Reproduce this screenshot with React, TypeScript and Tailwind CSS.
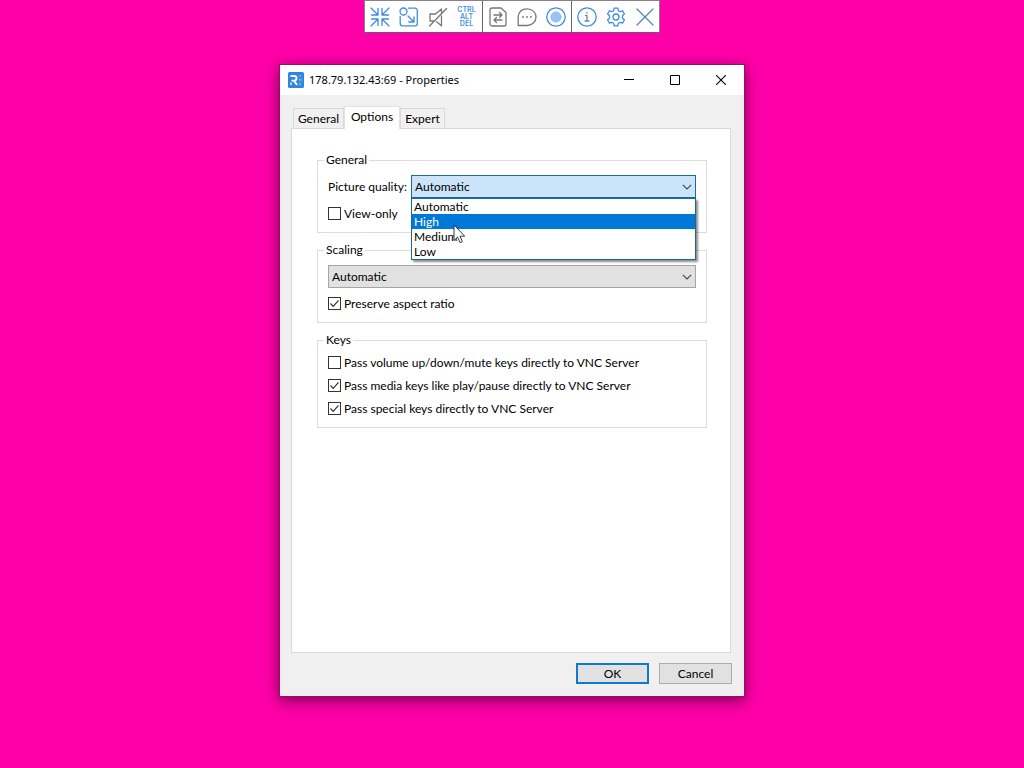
import { useState } from "react";
import type { ReactNode } from "react";

const BLUE = "#3d8ce4";
const GREY = "#777777";

function ToolButton({ label, children }: { label: string; children: ReactNode }) {
  return (
    <button type="button" aria-label={label} className="flex w-[29px] items-center justify-center">
      {children}
    </button>
  );
}

function ToolIcon({ color, children }: { color: string; children: ReactNode }) {
  return (
    <svg
      width="20"
      height="20"
      viewBox="0 0 20 20"
      fill="none"
      stroke={color}
      strokeWidth="1.3"
      strokeLinecap="round"
      strokeLinejoin="round"
    >
      {children}
    </svg>
  );
}

function Separator() {
  return <span className="ml-px w-px bg-[#666666]" />;
}

function Toolbar() {
  return (
    <div role="toolbar" className="flex h-[33px] border border-[#8c8088] border-b-[#77556c] bg-white">
      <ToolButton label="Exit full screen">
        <ToolIcon color={BLUE}>
          <path d="M1 1l7 7M8 1.500V8H1.500M19 1l-7 7M12 1.500V8h6.500M1 19l7-7M8 18.500V12H1.500M19 19l-7-7M12 18.500V12h6.500" />
        </ToolIcon>
      </ToolButton>
      <ToolButton label="Scale to window">
        <ToolIcon color={BLUE}>
          <circle cx="4.500" cy="4.500" r="3.500" />
          <path d="M9.500 1.200h6.500a2.300 2.300 0 0 1 2.300 2.300v13a2.300 2.300 0 0 1-2.300 2.300H3.500a2.300 2.300 0 0 1-2.300-2.300V9.500M9 9l6 6M15 9.800V15H9.800" />
        </ToolIcon>
      </ToolButton>
      <ToolButton label="Mute audio">
        <ToolIcon color={GREY}>
          <path d="M13.500 5V2L7.500 7H2v7h4M8.500 14.800l5 4V9M1.500 19L18.500 1.500" />
        </ToolIcon>
      </ToolButton>
      <button
        type="button"
        className="flex w-[29px] flex-col items-center justify-center font-['Inter',sans-serif] text-[7px] leading-[7px] font-semibold text-[#4a90dc]"
      >
        <span>CTRL</span>
        <span>ALT</span>
        <span>DEL</span>
      </button>
      <Separator />
      <ToolButton label="Transfer files">
        <ToolIcon color={GREY}>
          <path d="M4 1h9l5 4.500V17a2 2 0 0 1-2 2H4a2 2 0 0 1-2-2V3a2 2 0 0 1 2-2zM6 8h8M11.500 5.500L14 8l-2.500 2.500M14 13H6M8.500 10.500L6 13l2.500 2.500" />
        </ToolIcon>
      </ToolButton>
      <ToolButton label="Chat">
        <ToolIcon color={GREY}>
          <path d="M1.200 18.500V10C1.200 5.200 5 1.800 10 1.800s9 3.500 9 8.200-4 8.500-9 8.500z" />
          <path d="M6 10h.01M10 10h.01M14 10h.01" strokeWidth="1.800" />
        </ToolIcon>
      </ToolButton>
      <ToolButton label="Record session">
        <ToolIcon color={BLUE}>
          <circle cx="10" cy="10" r="9.200" />
          <circle cx="10" cy="10" r="5" fill="#9cc1f5" stroke="#8ab6f2" strokeWidth="1" />
        </ToolIcon>
      </ToolButton>
      <Separator />
      <ToolButton label="Session information">
        <ToolIcon color={BLUE}>
          <circle cx="10" cy="10" r="9.200" />
          <path d="M8.500 8.500H10V14M8 14h4M10 5.500v.4" stroke="#6b86b0" />
        </ToolIcon>
      </ToolButton>
      <ToolButton label="Properties">
        <ToolIcon color={BLUE}>
          <circle cx="10" cy="10" r="3" />
          <path d="M8.200 1.200h3.600l.6 2.500 1.700 1 2.500-.8 1.800 3.100-1.900 1.800v2.300l1.900 1.900-1.800 3.100-2.500-.8-1.700 1-.6 2.500H8.200l-.6-2.500-1.700-1-2.500.8L1.600 13l1.900-1.900V8.800L1.600 7l1.800-3.100 2.500.8 1.700-1z" />
        </ToolIcon>
      </ToolButton>
      <ToolButton label="End session">
        <ToolIcon color="#5686bb">
          <path d="M2 2l16 16M18 2L2 18" />
        </ToolIcon>
      </ToolButton>
    </div>
  );
}

function AppLogo() {
  return (
    <svg width="16" height="16" viewBox="0 0 16 16" fill="none">
      <rect width="16" height="16" rx="1.500" fill="#2f86dc" />
      <path d="M2.500 4H6.200a2.300 2.300 0 0 1 0 4.600H3.500M6 8.600L9 13" stroke="#ffffff" strokeWidth="1.900" />
      <path d="M3 10.500V13" stroke="#ffffff" strokeWidth="1.300" />
      <path d="M11 3l1 2 1-2M11.500 9V6.500L13.500 9V6.500M13.500 11h-2v2h2" stroke="#8fc2f4" strokeWidth="0.700" />
    </svg>
  );
}

function TitleBar() {
  return (
    <header className="flex h-[30px] items-stretch bg-white pl-2">
      <div className="flex flex-1 items-center gap-[5px]">
        <AppLogo />
        <h1 className="font-['Noto_Sans',sans-serif] text-[11px] leading-4">178.79.132.43:69 - Properties</h1>
      </div>
      <button type="button" aria-label="Minimize" className="flex w-[46px] items-center justify-center">
        <svg width="10" height="11" viewBox="0 0 10 11" stroke="#000000">
          <path d="M0 4.500h10" />
        </svg>
      </button>
      <button type="button" aria-label="Maximize" className="flex w-[46px] items-center justify-center">
        <svg width="10" height="10" viewBox="0 0 10 10" fill="none" stroke="#000000">
          <path d="M.5.5h9v9h-9z" />
        </svg>
      </button>
      <button type="button" aria-label="Close" className="flex w-[46px] items-center justify-center">
        <svg width="10" height="10" viewBox="0 0 10 10" stroke="#000000" strokeWidth="1.100">
          <path d="M0 0l10 10M10 0L0 10" />
        </svg>
      </button>
    </header>
  );
}

function Chevron() {
  return (
    <svg
      className="pointer-events-none col-start-1 row-start-1 mr-1 self-center justify-self-end"
      width="10"
      height="6"
      viewBox="0 0 10 6"
      fill="none"
      stroke="#444444"
      strokeWidth="1.100"
    >
      <path d="M.8.800L5 5 9.200.800" />
    </svg>
  );
}

function CheckOption({ id, label, checked = false }: { id: string; label: string; checked?: boolean }) {
  return (
    <div className="flex h-[15px] items-center gap-[3px]">
      <span className="grid">
        <input
          id={id}
          type="checkbox"
          defaultChecked={checked}
          className="peer col-start-1 row-start-1 size-[13px] appearance-none border border-[#333333] bg-white"
        />
        <svg
          className="pointer-events-none invisible col-start-1 row-start-1 peer-checked:visible"
          width="13"
          height="13"
          viewBox="0 0 13 13"
          fill="none"
          stroke="#333333"
          strokeWidth="1.200"
        >
          <path d="M2.500 6.500l2.700 2.800 5.300-6" />
        </svg>
      </span>
      <label htmlFor={id}>{label}</label>
    </div>
  );
}

function Group({ title, children }: { title: string; children: ReactNode }) {
  return (
    <fieldset className="min-w-0 border border-[#dcdcdc] px-2.5 pb-[11px]">
      <legend className="-ml-1 px-0.5 leading-4">{title}</legend>
      <div className="flex flex-col gap-2 pt-[7px]">{children}</div>
    </fieldset>
  );
}

function Pointer() {
  return (
    <svg className="pointer-events-none absolute top-[25px] left-[41px]" width="13" height="20" viewBox="0 0 13 20">
      <path
        d="M1 1v15.500l3.600-3.400 2.500 5.600 2.300-1-2.400-5.500h4.700z"
        fill="#ffffff"
        stroke="#222222"
        strokeWidth="0.900"
      />
    </svg>
  );
}

const QUALITIES = ["Automatic", "High", "Medium", "Low"];

function QualityPicker() {
  return (
    <div className="relative grid flex-1">
      <select
        id="quality"
        className="col-start-1 row-start-1 h-[23px] appearance-none border border-[#1a6a9c] bg-[#cce4f9] pl-[3px]"
      >
        {QUALITIES.map((q) => (
          <option key={q}>{q}</option>
        ))}
      </select>
      <Chevron />
      <div className="absolute inset-x-0 top-full z-10 border border-[#1a6a8c] bg-white shadow-[2px_2px_2px_rgba(0,0,0,0.45)]">
        <ul role="listbox" aria-label="Picture quality">
          {QUALITIES.map((q) => (
            <li
              key={q}
              role="option"
              aria-selected={q === "High"}
              className="h-[15px] pl-0.5 leading-[15px] aria-selected:bg-[#0078d7] aria-selected:text-white"
            >
              {q}
            </li>
          ))}
        </ul>
        <Pointer />
      </div>
    </div>
  );
}

function Tab({ label, width, active, onSelect }: { label: string; width: string; active: boolean; onSelect: () => void }) {
  const look = active
    ? "relative -mb-px h-[23px] border-[#e2e2e2] bg-white pb-[3px]"
    : "h-5 border-[#d9d9d9] bg-[#f0f0f0]";
  return (
    <button
      type="button"
      role="tab"
      aria-selected={active}
      onClick={onSelect}
      className={`flex items-center justify-center border border-b-0 ${width} ${look}`}
    >
      {label}
    </button>
  );
}

export default function App() {
  const [tab, setTab] = useState("Options");

  return (
    <main className="flex min-h-screen flex-col items-center gap-[31px] bg-[#ff00a8] font-['Lato',sans-serif] text-xs leading-[15px] text-black">
      <Toolbar />
      <section
        role="dialog"
        aria-label="Properties"
        className="flex min-h-[633px] w-[466px] max-w-full flex-col border border-[#8a1464] bg-[#f0f0f0] shadow-[0_4px_14px_rgba(0,0,0,0.5)]"
      >
        <TitleBar />
        <div className="flex flex-1 flex-col pt-[11px] pr-[13px] pl-[11px]">
          <div role="tablist" className="flex h-[22px] items-end pl-0.5">
            <Tab label="General" width="w-[51px]" active={tab === "General"} onSelect={() => setTab("General")} />
            <Tab label="Options" width="w-[56px]" active={tab === "Options"} onSelect={() => setTab("Options")} />
            <Tab label="Expert" width="w-[45px]" active={tab === "Expert"} onSelect={() => setTab("Expert")} />
          </div>
          <div role="tabpanel" className="flex-1 border border-[#d9d9d9] bg-white pt-[23px] pr-[23px] pl-[25px]">
            {tab === "Options" && (
              <div className="flex flex-col gap-[9px]">
                <Group title="General">
                  <div className="flex items-center">
                    <label htmlFor="quality" className="w-[83px]">
                      Picture quality:
                    </label>
                    <QualityPicker />
                  </div>
                  <CheckOption id="view-only" label="View-only" />
                </Group>
                <Group title="Scaling">
                  <div className="grid">
                    <select
                      aria-label="Scaling"
                      className="col-start-1 row-start-1 h-[23px] appearance-none border border-[#a5a5a5] bg-[#e1e1e1] pl-[3px]"
                    >
                      <option>Automatic</option>
                    </select>
                    <Chevron />
                  </div>
                  <CheckOption id="aspect" label="Preserve aspect ratio" checked />
                </Group>
                <Group title="Keys">
                  <CheckOption id="volume" label="Pass volume up/down/mute keys directly to VNC Server" />
                  <CheckOption id="media" label="Pass media keys like play/pause directly to VNC Server" checked />
                  <CheckOption id="special" label="Pass special keys directly to VNC Server" checked />
                </Group>
              </div>
            )}
          </div>
        </div>
        <footer className="flex justify-end gap-2.5 pt-2.5 pr-3 pb-3">
          <button type="button" className="h-[21px] w-[73px] border-2 border-[#0f78cf] bg-[#e1e1e1] leading-4">
            OK
          </button>
          <button type="button" className="h-[21px] w-[73px] border border-[#adadad] bg-[#e1e1e1] leading-4">
            Cancel
          </button>
        </footer>
      </section>
    </main>
  );
}
